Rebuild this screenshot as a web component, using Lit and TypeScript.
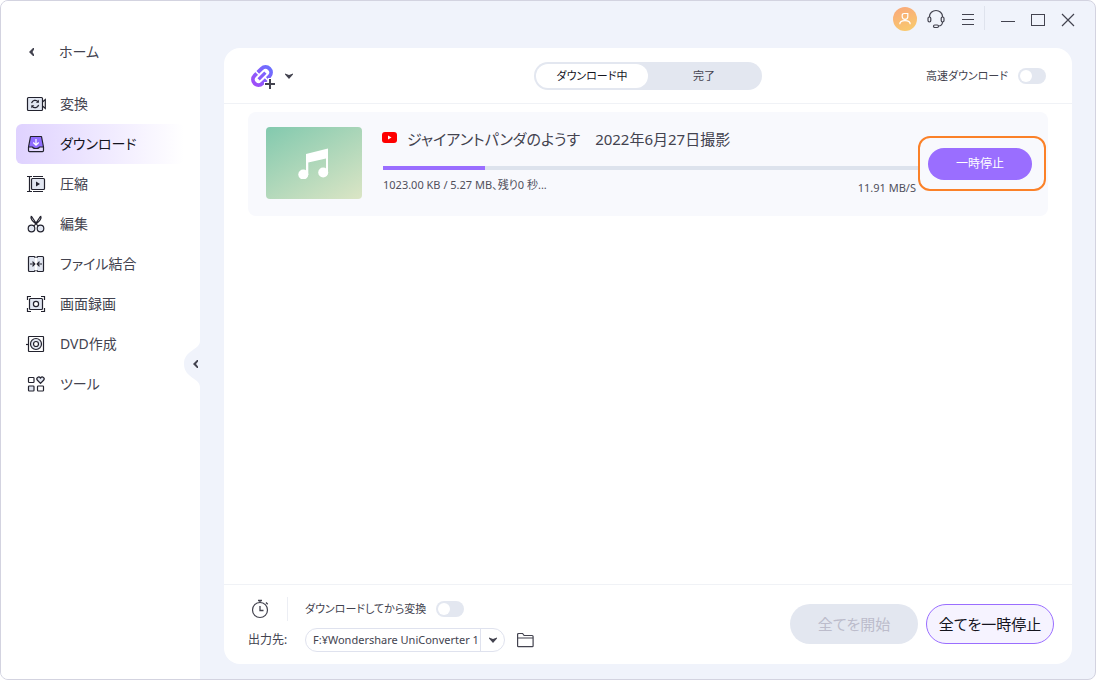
import { LitElement, html, css, svg, nothing } from "lit";
import { customElement, property, state } from "lit/decorators.js";
import { classMap } from "lit/directives/class-map.js";
import { styleMap } from "lit/directives/style-map.js";

const base = css`
  *,
  *::before,
  *::after {
    box-sizing: border-box;
  }
  button,
  select,
  input {
    font: inherit;
    color: inherit;
    margin: 0;
    padding: 0;
    border: 0;
    background: none;
  }
  button {
    cursor: pointer;
  }
  svg {
    display: block;
    flex: none;
  }
  a {
    color: inherit;
    text-decoration: none;
  }
`;

const line = "#22222e";
const soft = "#e1e6f1";

const icons: Record<string, unknown> = {
  convert: svg`
    <rect x="1.5" y="3.5" width="15" height="13" rx="1" fill=${soft} stroke=${line} stroke-width="1.2"/>
    <path d="M16.5 8 19.3 5.5v9L16.5 12" fill="none" stroke=${line} stroke-width="1.2"/>
    <path d="M5.6 9.2A3.7 3.7 0 0 1 12 7.6M12.6 10.8A3.7 3.7 0 0 1 6.2 12.4" fill="none" stroke=${line} stroke-width="1.3"/>
    <path d="M12.9 5.8v3h-3zM5.3 14.2v-3h3z" fill=${line}/>`,
  download: svg`
    <path d="M4.5 2.5h11l2 10.5h-4c-.6 2-6.4 2-7 0h-4z" fill="#8f6cff" stroke=${line} stroke-width="1.2" stroke-linejoin="round"/>
    <path d="M2.500 13v3.600a1 1 0 0 0 1 1h13a1 1 0 0 0 1-1V13" fill="none" stroke=${line} stroke-width="1.2"/>
    <path d="M10 5v6M7.300 8.500 10 11.200l2.700-2.700" fill="none" stroke="#fff" stroke-width="1.2"/>`,
  compress: svg`
    <path d="M3.500 2v16M1 2.500h5M1 17.500h5" fill="none" stroke=${line} stroke-width="1.2"/>
    <path d="M7 2.500h10M7 17.500h10" fill="none" stroke=${line}/>
    <rect x="5.500" y="4.500" width="13" height="11" rx="1" fill=${soft} stroke=${line} stroke-width="1.2"/>
    <path d="M10 7.500v5l4-2.500z" fill=${line}/>`,
  cut: svg`
    <path d="M5.300 2C4 4.500 5.500 6.500 13 12.500M14.700 2c1.300 2.500-.2 4.500-7.700 10.500M5.300 2 10 9M14.700 2 10 9" fill="none" stroke=${line} stroke-width="1.2"/>
    <circle cx="5.500" cy="14.500" r="3.300" fill=${soft} stroke=${line} stroke-width="1.2"/>
    <circle cx="14.500" cy="14.500" r="3.300" fill=${soft} stroke=${line} stroke-width="1.2"/>`,
  merge: svg`
    <path d="M9 4V3.500a1 1 0 0 0-1-1H3.500a1 1 0 0 0-1 1v13a1 1 0 0 0 1 1H8a1 1 0 0 0 1-1V16M11 4v-.500a1 1 0 0 1 1-1h4.500a1 1 0 0 1 1 1v13a1 1 0 0 1-1 1H12a1 1 0 0 1-1-1V16" fill=${soft} stroke=${line} stroke-width="1.2"/>
    <path d="M4 10h4.500M6.500 7.700 8.800 10l-2.300 2.300M16 10h-4.500M13.500 7.700 11.200 10l2.300 2.300" fill="none" stroke=${line} stroke-width="1.2"/>`,
  record: svg`
    <path d="M1.500 6V2.500H5M15 2.500h3.500V6M18.500 14v3.500H15M5 17.500H1.500V14" fill="none" stroke=${line} stroke-width="1.2"/>
    <rect x="3.500" y="4.500" width="13" height="11" rx="1" fill=${soft} stroke=${line} stroke-width="1.2"/>
    <circle cx="10" cy="10" r="2.600" fill="#fff" stroke=${line} stroke-width="1.2"/>`,
  disc: svg`
    <rect x="2.500" y="2.500" width="15" height="15" rx=".5" fill="#fff" stroke=${line} stroke-width="1.2"/>
    <path d="M0 10.500h3" stroke=${line} stroke-width="1.2"/>
    <circle cx="10" cy="10" r="5.500" fill=${soft} stroke=${line} stroke-width="1.2"/>
    <circle cx="10" cy="10" r="2.500" fill="#fff" stroke=${line} stroke-width="1.2"/>`,
  tools: svg`
    <rect x="2.500" y="3.500" width="5.500" height="5" rx=".8" fill="#fff" stroke=${line} stroke-width="1.2"/>
    <rect x="2.500" y="12" width="5.500" height="5" rx=".8" fill=${soft} stroke=${line} stroke-width="1.2"/>
    <rect x="11.500" y="12" width="6" height="5" rx=".8" fill="#fff" stroke=${line} stroke-width="1.2"/>
    <path d="M14.500 9.300 11.200 6C9.800 4 12.600 1.700 14.500 4c1.900-2.300 4.700 0 3.300 2z" fill=${soft} stroke=${line} stroke-width="1.2"/>`,
};

const icon = (body: unknown, size = 20) =>
  html`<svg width=${size} height=${size} viewBox="0 0 20 20" aria-hidden="true">${body}</svg>`;

@customElement("uc-sidebar")
class UcSidebar extends LitElement {
  @state() private current = "download";

  private items = [
    ["convert", "変換"],
    ["download", "ダウンロード"],
    ["compress", "圧縮"],
    ["cut", "編集"],
    ["merge", "ファイル結合"],
    ["record", "画面録画"],
    ["disc", "DVD作成"],
    ["tools", "ツール"],
  ];

  static styles = [
    base,
    css`
      :host {
        display: block;
        position: relative;
        background: #fff;
        padding: 31px 16px 0 15px;
        font-size: 14px;
        line-height: 20px;
        color: #43434f;
      }
      .home {
        display: flex;
        align-items: center;
        gap: 24px;
        height: 40px;
        padding-left: 11px;
        margin-bottom: 12px;
      }
      .item {
        display: flex;
        align-items: center;
        gap: 14px;
        height: 40px;
        padding-left: 10px;
        border-radius: 6px;
      }
      .active {
        background: linear-gradient(90deg, #dfd2ff, #fff);
        color: #14141e;
      }
      .fold {
        position: absolute;
        right: 0;
        top: 340px;
        width: 16px;
        height: 46px;
      }
    `,
  ];

  render() {
    return html`
      <a class="home" href="#home">
        <svg width="8" height="8" viewBox="0 0 8 8" aria-hidden="true">
          <path d="M7 0v1.500L5.500 4 7 6.500V8H6L2 4l4-4z" fill="#43434f" />
        </svg>
        ホーム
      </a>
      <nav aria-label="メニュー">
        ${this.items.map(
          ([id, label]) => html`<a
            href="#${id}"
            class=${classMap({ item: true, active: id === this.current })}
            aria-current=${id === this.current ? "page" : nothing}
            @click=${() => (this.current = id)}
            >${icon(icons[id])}${label}</a
          >`
        )}
      </nav>
      <button class="fold" aria-label="サイドバーを閉じる">
        <svg width="16" height="46" viewBox="0 0 16 46" aria-hidden="true">
          <path d="M16 0C16 9 0 9 0 23s16 14 16 23z" fill="#f0f3fb" />
          <path d="M14 19v1.500L12 23l2 2.500V27h-1l-4-4 4-4z" fill="#43434f" />
        </svg>
      </button>
    `;
  }
}

@customElement("uc-titlebar")
class UcTitlebar extends LitElement {
  static styles = [
    base,
    css`
      :host {
        display: flex;
        justify-content: flex-end;
        align-items: center;
        height: 37px;
        margin-bottom: 10px;
        padding-right: 12px;
      }
      button {
        display: grid;
        place-items: center;
        width: 30px;
        height: 24px;
      }
      .tools {
        display: flex;
        gap: 2px;
        margin-bottom: 2px;
      }
      .avatar {
        width: 24px;
        margin-right: 2px;
        border-radius: 12px;
        background: linear-gradient(160deg, #f9a77b, #f9cd6c);
      }
      .rule {
        width: 1px;
        height: 24px;
        margin: 0 8px 4px 1px;
        background: #dfe3ed;
      }
    `,
  ];

  render() {
    const stroke = "#43434f";
    return html`
      <div class="tools">
        <button class="avatar" aria-label="アカウント">
          ${icon(
            svg`<path d="M9 4.500h3.800V7.500a2.800 2.800 0 0 1-5.600 0V6.300A1.800 1.800 0 0 1 9 4.500zM4.800 15.200c0-2.500 1.700-3.500 5.200-3.500s5.200 1 5.200 3.500" fill="none" stroke="#fff" stroke-width="1.200"/>`
          )}
        </button>
        <button aria-label="サポート">
          ${icon(
            svg`<path d="M3.500 8V7.500a6.500 6 0 0 1 13 0V8M16.500 13c0 2-1.500 4-4 4" fill="none" stroke=${stroke} stroke-width="1.200"/>
            <rect x="2" y="8" width="2.800" height="5" rx="1.400" fill="none" stroke=${stroke} stroke-width="1.200"/>
            <rect x="15.200" y="8" width="2.800" height="5" rx="1.400" fill="none" stroke=${stroke} stroke-width="1.200"/>
            <rect x="7.500" y="16" width="5" height="2.500" rx="1.200" fill="none" stroke=${stroke} stroke-width="1.200"/>`
          )}
        </button>
        <button aria-label="メニュー">
          ${icon(svg`<path d="M4 5.500h12M4 10.500h12M4 15.500h12" stroke=${stroke}/>`)}
        </button>
      </div>
      <span class="rule"></span>
      <button aria-label="最小化">${icon(svg`<path d="M3 11.500h14" stroke=${stroke}/>`)}</button>
      <button aria-label="最大化">
        ${icon(svg`<rect x="3.500" y="4.500" width="13" height="11" fill="none" stroke=${stroke}/>`)}
      </button>
      <button aria-label="閉じる">
        ${icon(svg`<path d="M4 4l12 12M16 4 4 16" stroke=${stroke} stroke-width="1.200"/>`)}
      </button>
    `;
  }
}

@customElement("uc-toggle")
class UcToggle extends LitElement {
  @property() label = "";

  static styles = [
    base,
    css`
      :host {
        display: block;
      }
      label {
        display: flex;
        align-items: center;
        gap: 10px;
        font-size: 11px;
        line-height: 16px;
      }
      input {
        appearance: none;
        display: flex;
        align-items: center;
        width: 28px;
        height: 16px;
        padding: 2px;
        border-radius: 8px;
        background: #e3e7f0;
        cursor: pointer;
      }
      input::before {
        content: "";
        width: 12px;
        height: 12px;
        border-radius: 50%;
        background: #fff;
      }
      input:checked {
        justify-content: flex-end;
        background: #9a6eff;
      }
    `,
  ];

  render() {
    return html`<label>${this.label}<input type="checkbox" role="switch" /></label>`;
  }
}

@customElement("uc-task")
class UcTask extends LitElement {
  @property() name = "";
  @property() progress = "";
  @property() speed = "";
  @property({ type: Number }) percent = 0;

  static styles = [
    base,
    css`
      :host {
        display: flex;
        align-items: flex-start;
        min-height: 104px;
        padding: 15px 2px 0 18px;
        border-radius: 8px;
        background: #f8f9fd;
        font-size: 12px;
        line-height: 16px;
        color: #50505c;
      }
      .thumb {
        display: grid;
        place-items: center;
        flex: none;
        width: 96px;
        height: 72px;
        border-radius: 4px;
        background: linear-gradient(150deg, #82c9ae, #dbe5c5);
      }
      .body {
        flex: 1;
        min-width: 0;
        padding-left: 20px;
      }
      .title {
        display: flex;
        align-items: center;
        gap: 10px;
        margin: 0 0 15px;
        font-size: 15px;
        font-weight: 400;
        line-height: 24px;
        color: #43434f;
      }
      .bar {
        height: 4px;
        margin-left: 1px;
        background: #dde3ed;
      }
      .fill {
        height: 4px;
        background: #9a6eff;
      }
      .info {
        display: flex;
        justify-content: space-between;
        padding: 7px 2px 0 1px;
        font-size: 11px;
      }
      .speed {
        padding-top: 3px;
      }
      .focus {
        flex: none;
        margin-top: 9px;
        padding: 10px 12px 9px 8px;
        border: 2px solid #fb8128;
        border-radius: 12px;
      }
      .pause {
        display: block;
        width: 104px;
        height: 32px;
        border-radius: 16px;
        background: #9a6eff;
        color: #fff;
      }
    `,
  ];

  render() {
    return html`
      <div class="thumb">
        <svg width="32" height="32" viewBox="0 0 32 32" aria-hidden="true">
          <path d="M8 7 30 1.500V26h-2V11.500L10.300 15.500V28H8z" fill="#fff" />
          <circle cx="5.300" cy="27.500" r="5" fill="#fff" />
          <circle cx="25.200" cy="25.500" r="5" fill="#fff" />
        </svg>
      </div>
      <div class="body">
        <h2 class="title">
          <svg width="15" height="14" viewBox="0 0 15 14" aria-hidden="true">
            <rect width="15" height="11" rx="3" fill="#fe0000" />
            <path d="M6 3.500v4L9.500 5.500z" fill="#fff" />
          </svg>
          ${this.name}
        </h2>
        <div class="bar" role="progressbar" aria-valuenow=${this.percent} aria-label=${this.name}>
          <div class="fill" style=${styleMap({ width: `${this.percent}%` })}></div>
        </div>
        <div class="info"><span>${this.progress}</span><span class="speed">${this.speed}</span></div>
      </div>
      <div class="focus"><button class="pause">一時停止</button></div>
    `;
  }
}

@customElement("app-root")
class AppRoot extends LitElement {
  @state() private tab = 0;

  static styles = [
    base,
    css`
      :host {
        display: grid;
        grid-template-columns: 199px 1fr;
        box-sizing: border-box;
        min-height: 100vh;
        overflow: hidden;
        border: 1px solid #d3d3e0;
        border-radius: 8px;
        background: #f0f3fb;
        font-family: "Noto Sans", "Noto Sans CJK JP", sans-serif;
        font-feature-settings: "palt";
        font-size: 12px;
        line-height: 16px;
        color: #43434f;
      }
      .main {
        display: flex;
        flex-direction: column;
        min-width: 0;
      }
      .card {
        display: flex;
        flex-direction: column;
        flex: 1;
        margin: 0 23px 15px 24px;
        border-radius: 16px;
        background: #fff;
      }
      .head {
        display: grid;
        grid-template-columns: 1fr auto 1fr;
        align-items: center;
        height: 56px;
        padding: 0 26px;
        border-bottom: 1px solid #f0f2f6;
      }
      .add {
        display: flex;
        align-items: center;
        gap: 9px;
        justify-self: start;
      }
      .tabs {
        display: flex;
        width: 228px;
        height: 28px;
        padding: 2px;
        border-radius: 14px;
        background: #e3e7f0;
      }
      .tab {
        flex: 1;
        border-radius: 12px;
        font-size: 11px;
      }
      .on {
        background: #fff;
        color: #14141e;
      }
      .fast {
        justify-self: end;
      }
      .list {
        flex: 1;
        padding: 8px 24px;
      }
      .foot {
        display: flex;
        align-items: center;
        justify-content: space-between;
        height: 80px;
        padding: 0 18px 1px 24px;
        border-top: 1px solid #f0f2f6;
      }
      .options {
        display: grid;
        grid-template-columns: 40px 1fr;
        column-gap: 17px;
        row-gap: 7px;
        align-items: center;
        white-space: nowrap;
      }
      .timer {
        display: flex;
        height: 24px;
        padding-left: 2px;
        border-right: 1px solid #eceef4;
        align-items: center;
      }
      .path {
        display: flex;
        align-items: center;
        gap: 12px;
      }
      .combo {
        position: relative;
        width: 200px;
      }
      .combo select {
        appearance: none;
        display: block;
        width: 100%;
        height: 24px;
        padding: 0 25px 0 7px;
        border: 1px solid #dfe2ee;
        border-radius: 12px;
        background: #fff;
        font-size: 11px;
      }
      .arrow {
        position: absolute;
        right: 0;
        top: 0;
        display: grid;
        place-items: center;
        width: 25px;
        height: 24px;
        border-left: 1px solid #dfe2ee;
        pointer-events: none;
      }
      .actions {
        display: flex;
        gap: 8px;
      }
      .big {
        width: 128px;
        height: 40px;
        border-radius: 20px;
        font-size: 15px;
      }
      .start {
        background: #e3e7f0;
        color: #bcbccb;
      }
      .pause {
        border: 1px solid #9a6eff;
        background: #f6f3ff;
        color: #14141e;
      }
    `,
  ];

  render() {
    const arrow = html`<svg width="8" height="6" viewBox="0 0 8 6" aria-hidden="true">
      <path d="M0 .5 4 2l4-1.500v1L4 6 0 1.500z" fill="#43434f" />
    </svg>`;
    return html`
      <uc-sidebar></uc-sidebar>
      <div class="main">
        <uc-titlebar></uc-titlebar>
        <main class="card">
          <header class="head">
            <button class="add" aria-label="URLを追加">
              <svg width="26" height="26" viewBox="0 0 26 26" aria-hidden="true">
                <defs>
                  <linearGradient id="g" gradientUnits="userSpaceOnUse" x1="-12" y1="0" x2="12" y2="0">
                    <stop offset="0" stop-color="#a04cf8" />
                    <stop offset="1" stop-color="#6c70ff" />
                  </linearGradient>
                </defs>
                <g transform="translate(12 13) rotate(-45)" fill="none" stroke="url(#g)">
                  <path
                    d="M-1.500 -5.500H-5a5.500 5.500 0 0 0 0 11H.5M1.500 5.500H5a5.500 5.500 0 0 0 0-11H-.5"
                    stroke-width="3.800"
                  />
                  <path d="M-1.500 -8v5M1.500 3v5" stroke="#fff" stroke-width="1" />
                  <path d="M-4.800 .01H4.800" stroke-width="3.200" />
                </g>
                <path d="M20 15v11M14 21h11" stroke="#fff" stroke-width="4" />
                <path d="M20 16v10M15 21h10" stroke="#43434f" stroke-width="2" />
              </svg>
              ${arrow}
            </button>
            <div class="tabs" role="tablist">
              ${["ダウンロード中", "完了"].map(
                (t, i) => html`<button
                  role="tab"
                  aria-selected=${i === this.tab}
                  class=${classMap({ tab: true, on: i === this.tab })}
                  @click=${() => (this.tab = i)}
                >
                  ${t}
                </button>`
              )}
            </div>
            <uc-toggle class="fast" label="高速ダウンロード"></uc-toggle>
          </header>
          <section class="list">
            <uc-task
              name="ジャイアントパンダのようす　2022年6月27日撮影"
              progress="1023.00 KB / 5.27 MB、残り0 秒..."
              speed="11.91 MB/S"
              .percent=${19}
            ></uc-task>
          </section>
          <footer class="foot">
            <div class="options">
              <div class="timer">
                <button aria-label="タイマー">
                  ${icon(
                    svg`<circle cx="10" cy="11" r="7.500" fill="#fff" stroke="#43434f" stroke-width="1.200"/>
                    <path d="M8 1.500h4M10 1.500v2M10 7v4.500h3.500M16 3.500l1.700 1.700" fill="none" stroke="#43434f" stroke-width="1.300"/>`
                  )}
                </button>
              </div>
              <uc-toggle label="ダウンロードしてから変換"></uc-toggle>
              <label for="out">出力先:</label>
              <div class="path">
                <div class="combo">
                  <select id="out">
                    <option>F:¥Wondershare UniConverter 1</option>
                  </select>
                  <span class="arrow">${arrow}</span>
                </div>
                <button aria-label="フォルダを開く">
                  <svg width="17" height="16" viewBox="0 0 17 16" aria-hidden="true">
                    <path
                      d="M.6 14V2.500a1 1 0 0 1 1-1h4l1.500 2h8a1 1 0 0 1 1 1V14a.8.8 0 0 1-.8.6H1.400A.8.8 0 0 1 .6 14zM.6 6h15.500"
                      fill="none"
                      stroke="#43434f"
                      stroke-width="1.200"
                    />
                  </svg>
                </button>
              </div>
            </div>
            <div class="actions">
              <button class="big start" disabled>全てを開始</button>
              <button class="big pause">全てを一時停止</button>
            </div>
          </footer>
        </main>
      </div>
    `;
  }
}
